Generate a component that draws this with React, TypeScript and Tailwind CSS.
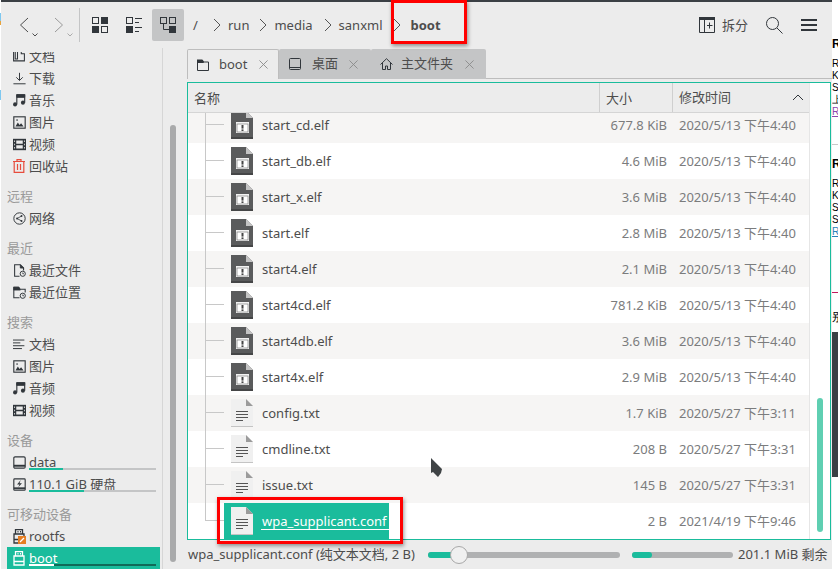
import type { ReactNode } from 'react';

const ink = '#31363b';

const Svg = ({ size = 16, children, className }: { size?: number; children: ReactNode; className?: string }) => (
  <svg width={size} height={size} viewBox="0 0 16 16" fill="none" stroke={ink} strokeWidth="1" className={`shrink-0 ${className ?? ''}`}>
    {children}
  </svg>
);

const ElfIcon = () => (
  <svg width="22" height="28" viewBox="0 0 22 28" className="shrink-0">
    <path d="M0 0H15L22 7V28H0Z" fill="#5a5b5c" />
    <path d="M0 26H22V28H0Z" fill="#454647" />
    <path d="M15 0L22 7H15Z" fill="#c4c4c4" />
    <rect x="5" y="11" width="13" height="11" fill="#f2f2f2" />
    <rect x="6" y="13" width="11" height="8" fill="#ffffff" stroke="#6a6a6a" strokeWidth="0.6" />
    <rect x="10.5" y="14" width="2" height="3.6" fill="#444" />
    <rect x="10.5" y="18.4" width="2" height="1.6" fill="#444" />
  </svg>
);

const TextIcon = () => (
  <svg width="22" height="28" viewBox="0 0 22 28" className="shrink-0">
    <path d="M0 0H15L22 7V28H0Z" fill="#f0f0f0" />
    <path d="M0 27H22V28H0Z" fill="#c4c4c4" />
    <path d="M15 0L22 7H15Z" fill="#9b9b9b" />
    <path d="M5 12.5H17M5 15.5H17M5 18.5H17M5 21.5H12" stroke="#555" strokeWidth="1" />
  </svg>
);

const Documents = () => (
  <Svg size={12}>
    <path d="M.8 1.5V14.5H15.2V5H11V1H6V12H3V1.5" strokeWidth="1.4" />
  </Svg>
);
const Download = () => (
  <Svg size={13}>
    <path d="M8 1V10M4 6.5L8 10.5L12 6.5M.5 14.5H15.5" strokeWidth="1.2" />
  </Svg>
);
const Music = () => (
  <Svg size={14}>
    <path d="M5.5 13V2H14.5V11" strokeWidth="1.3" />
    <path d="M5.5 2H14.5V5H5.5Z" fill={ink} />
    <circle cx="3.5" cy="13" r="2.3" fill={ink} stroke="none" />
    <circle cx="12.5" cy="11" r="2.3" fill={ink} stroke="none" />
  </Svg>
);
const Picture = () => (
  <Svg size={13}>
    <rect x="1" y="1" width="14" height="14" strokeWidth="1.4" />
    <path d="M3 13L6 8L8 11L10 9L13 13Z" fill={ink} stroke="none" />
    <circle cx="5" cy="5" r="1" fill={ink} stroke="none" />
  </Svg>
);
const Film = () => (
  <Svg size={13}>
    <path d="M0 1H16V15H0Z" fill={ink} stroke="none" />
    <path d="M4 3H12V7H4ZM4 9H12V13H4ZM1.5 3H2.5V5H1.5ZM1.5 7H2.5V9H1.5ZM1.5 11H2.5V13H1.5ZM13.5 3H14.5V5H13.5ZM13.5 7H14.5V9H13.5ZM13.5 11H14.5V13H13.5Z" fill="#ececec" stroke="none" />
  </Svg>
);
const Trash = () => (
  <svg width="12" height="14" viewBox="0 0 12 14" fill="none" stroke="#e74c3c" strokeWidth="1.2" className="shrink-0">
    <path d="M0 2.5H12M4 2.5V.6H8V2.5M1.2 2.5V13.4H10.8V2.5M4.5 5V11M7.5 5V11" />
  </svg>
);
const Network = () => (
  <Svg size={13}>
    <circle cx="8" cy="8" r="7" strokeWidth="1.2" />
    <circle cx="5" cy="8" r="1.2" fill={ink} stroke="none" />
    <circle cx="10.5" cy="5" r="1.2" fill={ink} stroke="none" />
    <circle cx="10.5" cy="11" r="1.2" fill={ink} stroke="none" />
    <path d="M10.5 5L5 8L10.5 11" />
  </Svg>
);
const RecentFile = () => (
  <Svg size={13}>
    <path d="M8 15H2V1H9L13 5V8" strokeWidth="1.3" />
    <path d="M9 1L13 5H9Z" fill={ink} />
    <circle cx="12" cy="12" r="3.2" strokeWidth="1.2" />
    <path d="M12 10.5V12H13.5" />
  </Svg>
);
const RecentPlace = () => (
  <Svg size={13}>
    <path d="M8 14.5H1V1.5H7L9 4H15V8" strokeWidth="1.3" />
    <path d="M1 1.5H7L9 5H1Z" fill={ink} />
    <circle cx="12" cy="12" r="3.2" strokeWidth="1.2" />
    <path d="M12 10.5V12H13.5" />
  </Svg>
);
const Lines = () => (
  <Svg size={13}>
    <path d="M0 2.5H14M0 6H9M0 9.5H14M0 13H11" strokeWidth="1.2" />
  </Svg>
);
const Drive = () => (
  <Svg size={13}>
    <rect x="1" y="1" width="14" height="14" rx="1.5" strokeWidth="1.4" />
    <path d="M1 12H15" strokeWidth="2.4" />
  </Svg>
);
const DriveBolt = () => (
  <Svg size={13}>
    <rect x="1" y="1" width="14" height="14" rx="1" strokeWidth="1.4" />
    <path d="M1 12.5H15" strokeWidth="2" />
    <path d="M9.5 2.5L5 8H8L6.5 11.5L11 6.5H8Z" fill={ink} stroke="none" />
  </Svg>
);
const Usb = ({ white }: { white?: boolean }) => {
  const color = white ? '#ffffff' : ink;
  return (
    <svg width="14" height="15" viewBox="0 0 14 15" fill="none" stroke={color} strokeWidth="1.3" className="shrink-0">
      <path d="M3.5 .7H10.5V5H3.5ZM2 5H12V14H2ZM2 10.5H12" />
      <path d="M5.5 2H6.5V3.5H5.5ZM8 2H9V3.5H8Z" fill={color} stroke="none" />
      {!white && <rect x="6" y="7" width="8" height="8" fill="#e67e22" stroke="none" />}
      {!white && <path d="M8 13L12 9" stroke="#ffffff" />}
    </svg>
  );
};

type SideItem = { label: string; icon?: ReactNode; bar?: number; active?: boolean };

const sidebar: { title?: string; items: SideItem[] }[] = [
  {
    items: [
      { label: '文档', icon: <Documents /> },
      { label: '下载', icon: <Download /> },
      { label: '音乐', icon: <Music /> },
      { label: '图片', icon: <Picture /> },
      { label: '视频', icon: <Film /> },
      { label: '回收站', icon: <Trash /> },
    ],
  },
  { title: '远程', items: [{ label: '网络', icon: <Network /> }] },
  {
    title: '最近',
    items: [
      { label: '最近文件', icon: <RecentFile /> },
      { label: '最近位置', icon: <RecentPlace /> },
    ],
  },
  {
    title: '搜索',
    items: [
      { label: '文档', icon: <Lines /> },
      { label: '图片', icon: <Picture /> },
      { label: '音频', icon: <Music /> },
      { label: '视频', icon: <Film /> },
    ],
  },
  {
    title: '设备',
    items: [
      { label: 'data', icon: <Drive />, bar: 27 },
      { label: '110.1 GiB 硬盘', icon: <DriveBolt />, bar: 43 },
    ],
  },
  {
    title: '可移动设备',
    items: [
      { label: 'rootfs', icon: <Usb /> },
      { label: 'boot', icon: <Usb white />, bar: 20, active: true },
    ],
  },
];

const files = [
  { name: 'start_cd.elf', size: '677.8 KiB', date: '2020/5/13 下午4:40', elf: true },
  { name: 'start_db.elf', size: '4.6 MiB', date: '2020/5/13 下午4:40', elf: true },
  { name: 'start_x.elf', size: '3.6 MiB', date: '2020/5/13 下午4:40', elf: true },
  { name: 'start.elf', size: '2.8 MiB', date: '2020/5/13 下午4:40', elf: true },
  { name: 'start4.elf', size: '2.1 MiB', date: '2020/5/13 下午4:40', elf: true },
  { name: 'start4cd.elf', size: '781.2 KiB', date: '2020/5/13 下午4:40', elf: true },
  { name: 'start4db.elf', size: '3.6 MiB', date: '2020/5/13 下午4:40', elf: true },
  { name: 'start4x.elf', size: '2.9 MiB', date: '2020/5/13 下午4:40', elf: true },
  { name: 'config.txt', size: '1.7 KiB', date: '2020/5/27 下午3:11' },
  { name: 'cmdline.txt', size: '208 B', date: '2020/5/27 下午3:31' },
  { name: 'issue.txt', size: '145 B', date: '2020/5/27 下午3:31' },
  { name: 'wpa_supplicant.conf', size: '2 B', date: '2021/4/19 下午9:46', selected: true },
];

const Sidebar = () => (
  <div className="flex w-[186px] shrink-0">
    <div className="w-[162px] shrink-0 overflow-hidden border-r border-[#d6d6d6] pl-[6px] pr-[2px]">
      <div className="mt-[4px] h-full overflow-hidden">
        <div className="-mt-[7px]">
          {sidebar.map((group, i) => (
            <div key={i} className={group.title ? 'pt-[8px]' : ''}>
              {group.title && <div className="h-[22px] leading-[22px] text-[#9a9a9a]">{group.title}</div>}
              {group.items.map((item) => (
                <div
                  key={item.label + i}
                  className={`relative flex h-[22px] items-center ${item.active ? 'bg-[#1abc9c] text-white' : ''}`}
                >
                  <div className="flex w-[22px] shrink-0 justify-center pl-[2px]">{item.icon}</div>
                  <span className="whitespace-nowrap leading-[22px]">{item.label}</span>
                  {item.bar !== undefined && (
                    <div className={`absolute bottom-[3px] left-[22px] h-[2px] w-[127px] ${item.active ? 'bg-[#116a58]' : 'bg-[#c4c5c6]'}`}>
                      <div className={`h-full ${item.active ? 'bg-white' : 'bg-[#1abc9c]'}`} style={{ width: `${item.bar}%` }} />
                    </div>
                  )}
                </div>
              ))}
            </div>
          ))}
        </div>
      </div>
    </div>
    <div className="ml-[7px] mt-[77px] mb-[7px] w-[6px] rounded-full bg-[#a9aaab]" />
  </div>
);

const FileRow = ({ file, index, last }: { file: (typeof files)[number]; index: number; last: boolean }) => (
  <div className={`flex h-[36px] ${index % 2 === 0 ? 'bg-[#f6f5f4]' : 'bg-white'}`}>
    <div className="flex w-[412px] shrink-0">
      <div className={`ml-[17px] h-full w-[19px] shrink-0 ${last ? '' : 'border-l border-[#c8c8c8]'}`}>
        <div className={`h-1/2 border-b border-[#c8c8c8] ${last ? 'border-l' : ''}`} />
      </div>
      <div className={`relative flex h-full items-center pl-[7px] ${file.selected ? 'bg-[#1abc9c] text-white' : ''}`}>
        {file.elf ? <ElfIcon /> : <TextIcon />}
        <span className={`ml-[9px] whitespace-nowrap leading-[38px] ${file.selected ? 'w-[127px]' : ''}`}>{file.name}</span>
        {file.selected && <div className="absolute bottom-[9px] right-0 h-px w-[128px] bg-white" />}
      </div>
    </div>
    <div className="w-[67px] shrink-0 whitespace-nowrap text-right leading-[36px] text-[#7b7c7d]">{file.size}</div>
    <div className="ml-[12px] whitespace-nowrap leading-[36px] text-[#7b7c7d]">{file.date}</div>
  </div>
);

const FileList = () => (
  <div className="flex h-[458px] w-[644px] border border-[#1abc9c] bg-white">
    <div className="w-[621px] shrink-0 overflow-hidden">
      <div className="relative z-10 flex h-[30px] border-b border-[#d5d5d5] bg-[#ececec] leading-[31px]">
        <div className="w-[412px] shrink-0 border-r border-[#cfcfcf] pl-[6px]">名称</div>
        <div className="w-[73px] shrink-0 border-r border-[#cfcfcf] pl-[6px]">大小</div>
        <div className="flex flex-1 items-center justify-between pl-[6px] pr-[5px]">
          <span>修改时间</span>
          <svg width="12" height="7" viewBox="0 0 12 7" fill="none" stroke={ink}>
            <path d="M1 6L6 1L11 6" />
          </svg>
        </div>
      </div>
      <div className="-mt-[6px]">
        {files.map((f, i) => (
          <FileRow key={f.name} file={f} index={i} last={i === files.length - 1} />
        ))}
      </div>
    </div>
    <div className="flex-1 border-l border-[#e6e6e6] pl-[7px] pt-[315px]">
      <div className="h-[134px] w-[6px] rounded-full bg-[#5fcfb2]" />
    </div>
  </div>
);

type TabProps = { icon: ReactNode; label: string; active?: boolean; className: string; labelClass: string; closeClass: string };

const Tab = ({ icon, label, active, className, labelClass, closeClass }: TabProps) => (
  <div className={`flex h-[30px] items-center rounded-t-[2px] ${className} ${active ? 'border-x border-t border-[#bdbdbd] bg-[#ececec]' : 'bg-[#c4c5c6]'}`}>
    {icon}
    <span className={`whitespace-nowrap ${labelClass}`}>{label}</span>
    <svg width="9" height="9" viewBox="0 0 10 10" stroke="#8a8a8a" className={`ml-auto shrink-0 ${closeClass}`}>
      <path d="M.5 .5L9.5 9.5M9.5 .5L.5 9.5" />
    </svg>
  </div>
);

const StatusBar = () => (
  <div className="flex h-[29px] items-center leading-[31px]">
    <span className="ml-[1px] w-[240px] shrink-0 whitespace-nowrap">wpa_supplicant.conf (纯文本文档, 2 B)</span>
    <div className="relative h-[6px] w-[192px] shrink-0 rounded-full bg-[#b0b1b2]">
      <div className="h-full w-[24px] rounded-l-full bg-[#1abc9c]" />
      <div className="absolute -top-[6px] left-[22px] size-[18px] rounded-full border border-[#a8a8a8] bg-[#f0f0f0]" />
    </div>
    <div className="ml-[12px] h-[6px] w-[101px] shrink-0 rounded-full bg-[#b0b1b2]">
      <div className="h-full w-[20px] rounded-full bg-[#1abc9c]" />
    </div>
    <span className="ml-[5px] whitespace-nowrap">201.1 MiB 剩余</span>
  </div>
);

const Crumb = () => (
  <svg width="8" height="14" viewBox="0 0 8 14" fill="none" stroke="#555" className="shrink-0">
    <path d="M1 1L7 7L1 13" />
  </svg>
);

const Toolbar = () => (
  <div className="flex h-[46px] items-center leading-[48px]">
    <div className="relative ml-[18px] w-[10px]">
      <svg width="10" height="16" viewBox="0 0 10 16" fill="none" stroke="#4d4d4d">
        <path d="M9 1L1.5 8L9 15" />
      </svg>
      <svg width="6" height="4" viewBox="0 0 6 4" fill="none" stroke="#4d4d4d" className="absolute left-[13px] top-[16px]">
        <path d="M.5 .5L3 3L5.5 .5" />
      </svg>
    </div>
    <div className="relative ml-[25px] w-[10px]">
      <svg width="10" height="16" viewBox="0 0 10 16" fill="none" stroke="#9a9a9a">
        <path d="M1 1L8.5 8L1 15" />
      </svg>
      <svg width="6" height="4" viewBox="0 0 6 4" fill="none" stroke="#aaa" className="absolute left-[13px] top-[16px]">
        <path d="M.5 .5L3 3L5.5 .5" />
      </svg>
    </div>
    <div className="ml-[15px] h-[34px] w-px bg-[#c4c5c6]" />
    <svg width="16" height="16" viewBox="0 0 16 16" fill="none" stroke={ink} className="ml-[12px] shrink-0">
      <rect x=".5" y=".5" width="6" height="6" />
      <rect x="9" y="0" width="7" height="7" fill={ink} stroke="none" />
      <rect x="0" y="9" width="7" height="7" fill={ink} stroke="none" />
      <rect x="9.5" y="9.5" width="6" height="6" />
    </svg>
    <svg width="16" height="16" viewBox="0 0 16 16" fill="none" stroke={ink} className="ml-[18px] shrink-0">
      <rect x=".5" y=".5" width="6" height="6" />
      <rect x="0" y="9" width="7" height="7" fill={ink} stroke="none" />
      <path d="M9 1.5H16M9 5.5H13M9 10.5H16M9 14.5H13" />
    </svg>
    <div className="ml-[10px] flex size-[32px] items-center justify-center rounded-[2px] bg-[#c4c5c6]">
      <svg width="16" height="16" viewBox="0 0 16 16" fill="none" stroke={ink}>
        <rect x=".5" y=".5" width="6" height="6" />
        <rect x="9.5" y=".5" width="6" height="6" />
        <rect x="9" y="9" width="7" height="7" fill={ink} stroke="none" />
        <path d="M3.5 7V12.5H9" />
      </svg>
    </div>
    <span className="ml-[9px] w-[20px]">/</span>
    <Crumb />
    <span className="ml-[7px]">run</span>
    <span className="ml-[10px]"><Crumb /></span>
    <span className="ml-[7px]">media</span>
    <span className="ml-[11px]"><Crumb /></span>
    <span className="ml-[7px]">sanxml</span>
    <span className="ml-[10px]"><Crumb /></span>
    <span className="ml-[10px] font-bold">boot</span>
    <svg width="16" height="16" viewBox="0 0 16 16" fill="none" stroke={ink} className="ml-auto shrink-0">
      <path d="M.5 .5H15.5V15.5H.5ZM5.5 1V15M8 8.5H13.5M10.5 5.5V11.5" />
      <rect x="0" y="0" width="16" height="3" fill={ink} stroke="none" />
    </svg>
    <span className="ml-[7px] whitespace-nowrap">拆分</span>
    <svg width="17" height="17" viewBox="0 0 17 17" fill="none" stroke={ink} className="ml-[18px] shrink-0">
      <circle cx="6.5" cy="6.5" r="6" />
      <path d="M11 11L16.5 16.5" />
    </svg>
    <svg width="16" height="12" viewBox="0 0 16 12" fill={ink} className="ml-[18px] mr-[15px] shrink-0">
      <rect width="16" height="2" />
      <rect y="5" width="16" height="2" />
      <rect y="10" width="16" height="2" />
    </svg>
  </div>
);

const OffscreenPage = () => (
  <div className="w-[6px] shrink-0 overflow-hidden whitespace-nowrap bg-white font-['Liberation_Sans',sans-serif] text-[10px] leading-[12px] text-black">
    <div className="mt-[38px] text-[12px] font-bold">Ra</div>
    <div className="mt-[8px]">Re</div>
    <div>Ke</div>
    <div>Si</div>
    <div>上</div>
    <div className="text-[#8e44ad] underline">Re</div>
    <div className="mt-[26px] h-px bg-[#c8c8c8]" />
    <div className="mt-[13px] text-[12px] font-bold">Ra</div>
    <div className="mt-[8px]">Re</div>
    <div>Ke</div>
    <div>Si</div>
    <div>Sh</div>
    <div className="text-[#2980b9] underline">Re</div>
    <div className="mt-[54px] h-px bg-[#c2185b]" />
    <div className="mt-[18px] text-[12px]">别</div>
    <div className="mt-[9px] h-[145px] bg-[#3b4045]" />
  </div>
);

export default function App() {
  return (
    <div className="relative flex h-[569px] w-[838px] overflow-hidden bg-white font-['Noto_Sans','Noto_Sans_CJK_SC',sans-serif] text-[13px] text-[#4d4d4d]">
      <div className="w-px shrink-0 bg-white pt-[13px]">
        <div className="h-[8px] bg-[#7ec8f0]" />
        <div className="h-[4px] bg-[#e8a33d]" />
        <div className="mt-[65px] h-[10px] bg-[#7ec8f0]" />
      </div>
      <div className="flex w-[831px] shrink-0 flex-col bg-[#ececec]">
        <div className="h-[2px] shrink-0 bg-[#3b4045]" />
        <Toolbar />
        <div className="flex min-h-0 flex-1">
          <Sidebar />
          <div className="flex w-[645px] flex-col pt-[1px]">
            <div className="flex h-[30px] border-b border-[#bdbdbd]">
              <Tab
                active
                className="w-[92px] pl-[9px]"
                labelClass="ml-[10px]"
                closeClass="mr-[10px]"
                label="boot"
                icon={
                  <svg width="12" height="12" viewBox="0 0 12 12" fill="none" stroke={ink} className="shrink-0">
                    <path d="M.5 1.5H5.5L6.5 3H11.5V11.5H.5Z" />
                    <path d="M0 1H5.5L6.5 3.5H0Z" fill={ink} />
                  </svg>
                }
              />
              <Tab
                className="w-[92px] pl-[10px]"
                labelClass="ml-[11px]"
                closeClass="mr-[13px]"
                label="桌面"
                icon={
                  <svg width="12" height="12" viewBox="0 0 12 12" fill="none" stroke={ink} className="shrink-0">
                    <rect x=".5" y=".5" width="11" height="11" rx="1" />
                    <path d="M.5 9.5H11.5" />
                  </svg>
                }
              />
              <Tab
                className="w-[115px] pl-[9px]"
                labelClass="ml-[8px]"
                closeClass="mr-[12px]"
                label="主文件夹"
                icon={
                  <svg width="13" height="12" viewBox="0 0 13 12" fill="none" stroke={ink} className="shrink-0">
                    <path d="M.5 6.5L6.5 .7L12.5 6.5M2.5 5V11.5H5.5V8H7.5V11.5H10.5V5" />
                  </svg>
                }
              />
            </div>
            <div className="mt-[3px]">
              <FileList />
            </div>
            <StatusBar />
          </div>
        </div>
      </div>
      <OffscreenPage />
      {/* red annotations drawn over the screenshot */}
      <div className="absolute left-[391px] top-0 h-[44px] w-[76px] border-[3px] border-[#ff0000] shadow-[1px_2px_4px_rgba(0,0,0,0.4)]" />
      <div className="absolute left-[217px] top-[497px] h-[47px] w-[186px] border-[3px] border-[#ff0000] shadow-[1px_2px_4px_rgba(0,0,0,0.4)]" />
      <svg width="12" height="20" viewBox="0 0 12 20" className="absolute left-[431px] top-[458px]">
        <path d="M0 0L11 11L10 15L7 19L2 14L0 15Z" fill="#3f4345" />
      </svg>
    </div>
  );
}
